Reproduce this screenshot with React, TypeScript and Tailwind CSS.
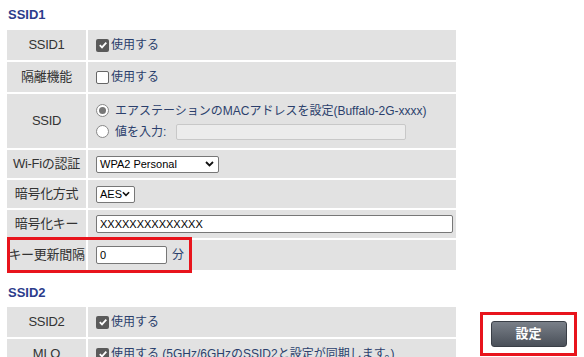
import type { ReactNode } from 'react'

const font = { fontFamily: '"Liberation Sans", "Noto Sans CJK JP", sans-serif' }

function Check({ on }: { on: boolean }) {
  return on ? (
    <span className="inline-flex h-[13px] w-[13px] items-center justify-center rounded-[2px] bg-[#5a5a5a]">
      <svg width="10" height="10" viewBox="0 0 10 10">
        <path d="M1.8 5.2 L4 7.4 L8.3 2.6" fill="none" stroke="#fff" strokeWidth="1.8" />
      </svg>
    </span>
  ) : (
    <span className="inline-block h-[13px] w-[13px] rounded-[2px] border border-[#666] bg-white" />
  )
}

function Radio({ on }: { on: boolean }) {
  return (
    <span className="inline-flex h-[13px] w-[13px] items-center justify-center rounded-full border border-[#888] bg-white">
      {on && <span className="h-[7px] w-[7px] rounded-full bg-[#777]" />}
    </span>
  )
}

function Select({ value, w }: { value: string; w: string }) {
  return (
    <span className={`flex h-[17px] items-center justify-between rounded-[2px] border border-[#777] bg-white pl-[3px] pr-[4px] text-[11px] text-black ${w}`}>
      {value}
      <svg width="9" height="6" viewBox="0 0 9 6">
        <path d="M1 1 L4.5 4.5 L8 1" fill="none" stroke="#111" strokeWidth="1.8" />
      </svg>
    </span>
  )
}

function Row({ label, h, children }: { label: string; h: string; children: ReactNode }) {
  return (
    <div className={`flex border-b-2 border-white ${h}`}>
      <div className="flex w-[81px] shrink-0 items-center justify-center border-r-2 border-white text-[13px] tracking-[-0.3px] text-[#333]">
        {label}
      </div>
      <div className="flex flex-1 flex-col justify-center gap-[3px] pl-[8px] text-[12px] text-[#2b3f6c]">
        {children}
      </div>
    </div>
  )
}

export default function App() {
  return (
    <div className="relative h-[357px] w-[584px] overflow-hidden bg-white" style={font}>
      <div className="pl-[7px] pt-[5px]">
        <h2 className="h-[23px] pl-[1px] text-[13px] font-bold text-[#2c3c8c]">SSID1</h2>
        <div className="w-[449px] border-t-2 border-white bg-[#e2e2e2]">
          <Row label="SSID1" h="h-[32px]">
            <span className="flex items-center gap-[2px]"><Check on />使用する</span>
          </Row>
          <Row label="隔離機能" h="h-[32px]">
            <span className="flex items-center gap-[2px]"><Check on={false} />使用する</span>
          </Row>
          <Row label="SSID" h="h-[56px]">
            <span className="flex items-center gap-[6px]"><Radio on />エアステーションのMACアドレスを設定(Buffalo-2G-xxxx)</span>
            <span className="flex items-center gap-[6px]">
              <Radio on={false} />値を入力:
              <span className="ml-[4px] h-[16px] w-[230px] rounded-[2px] border border-[#c8c8c8] bg-[#ececec]" />
            </span>
          </Row>
          <Row label="Wi-Fiの認証" h="h-[30px]">
            <Select value="WPA2 Personal" w="w-[123px]" />
          </Row>
          <Row label="暗号化方式" h="h-[30px]">
            <Select value="AES" w="w-[39px]" />
          </Row>
          <Row label="暗号化キー" h="h-[30px]">
            <span className="flex h-[18px] w-[357px] items-center rounded-[2px] border border-[#777] bg-white pl-[3px] text-[11px] text-black">
              XXXXXXXXXXXXXX
            </span>
          </Row>
          <Row label="キー更新間隔" h="h-[32px]">
            <span className="flex items-center gap-[5px]">
              <span className="flex h-[18px] w-[71px] items-center rounded-[2px] border border-[#777] bg-white pl-[3px] text-[11px] text-black">0</span>
              分
            </span>
          </Row>
        </div>
        <h2 className="mt-[11px] h-[22px] pl-[1px] text-[13px] font-bold text-[#2c3c8c]">SSID2</h2>
        <div className="w-[449px] border-t-2 border-white bg-[#e2e2e2]">
          <Row label="SSID2" h="h-[32px]">
            <span className="flex items-center gap-[2px]"><Check on />使用する</span>
          </Row>
          <Row label="MLO" h="h-[32px]">
            <span className="flex items-center gap-[2px]"><Check on />使用する (5GHz/6GHzのSSID2と設定が同期します。)</span>
          </Row>
        </div>
      </div>

      <div className="pointer-events-none absolute left-[7px] top-[237px] h-[36px] w-[185px] border-[3px] border-[#e8141c]" />

      <div className="absolute left-[480px] top-[312px] flex h-[44px] w-[97px] items-center justify-center border-[3px] border-[#e8141c]">
        <span className="flex h-[26px] w-[76px] items-center justify-center rounded-[3px] border border-[#3a3f47] bg-gradient-to-b from-[#7a8089] to-[#4a5059] text-[13px] font-bold text-white">
          設定
        </span>
      </div>
    </div>
  )
}
